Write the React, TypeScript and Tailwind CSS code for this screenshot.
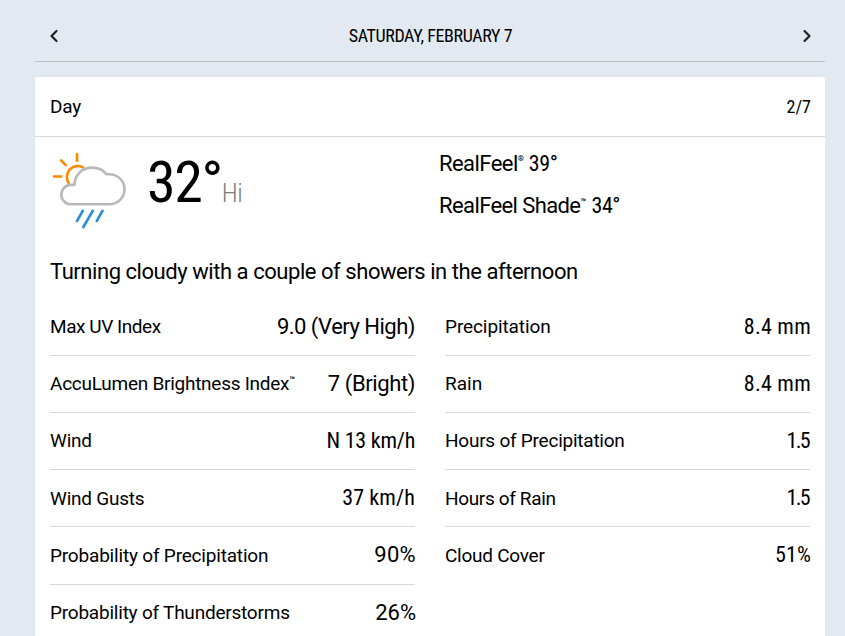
import { ChevronLeft, ChevronRight } from "lucide-react";
import clsx from "clsx";

type Detail = {
  label: string;
  mark?: string;
  value: string;
  labelClass: string;
  valueClass: string;
};

const leftDetails: Detail[] = [
  { label: "Max UV Index", value: "9.0 (Very High)", labelClass: "tracking-[-0.45px]", valueClass: "[font-stretch:100%] tracking-[-0.5px]" },
  { label: "AccuLumen Brightness Index", mark: "™", value: "7 (Bright)", labelClass: "tracking-[-0.26px]", valueClass: "[font-stretch:100%] tracking-[-0.4px]" },
  { label: "Wind", value: "N 13 km/h", labelClass: "tracking-[-0.2px]", valueClass: "tracking-[-0.25px]" },
  { label: "Wind Gusts", value: "37 km/h", labelClass: "tracking-[-0.22px]", valueClass: "tracking-[0.1px]" },
  { label: "Probability of Precipitation", value: "90%", labelClass: "tracking-[-0.19px]", valueClass: "[font-stretch:100%] tracking-[0.3px] -mr-px" },
  { label: "Probability of Thunderstorms", value: "26%", labelClass: "tracking-[-0.22px]", valueClass: "[font-stretch:100%] -mr-px" },
];

const rightDetails: Detail[] = [
  { label: "Precipitation", value: "8.4 mm", labelClass: "tracking-[-0.1px]", valueClass: "-mr-px tracking-[0.25px]" },
  { label: "Rain", value: "8.4 mm", labelClass: "", valueClass: "-mr-px tracking-[0.25px]" },
  { label: "Hours of Precipitation", value: "1.5", labelClass: "tracking-[-0.24px]", valueClass: "tracking-[-1.7px] pr-px" },
  { label: "Hours of Rain", value: "1.5", labelClass: "tracking-[-0.35px]", valueClass: "tracking-[-1.7px] pr-px" },
  { label: "Cloud Cover", value: "51%", labelClass: "tracking-[-0.25px]", valueClass: "-mr-px tracking-[0.1px]" },
];

function DetailList({ items }: { items: Detail[] }) {
  return (
    <div className="w-[365px]">
      {items.map((item) => (
        <div
          key={item.label}
          className="flex h-[57.2px] items-center justify-between border-b border-[#d8d8d8] last:border-transparent"
        >
          <p className={clsx("flex pt-[1.2px] text-[19px] whitespace-nowrap [font-stretch:100%]", item.labelClass)}>
            {item.label}
            {item.mark && (
              <span className="text-[9px] leading-[21px] font-bold tracking-normal">{item.mark}</span>
            )}
          </p>
          <p className={clsx("pb-[1px] text-[22px] whitespace-nowrap", item.valueClass)}>{item.value}</p>
        </div>
      ))}
    </div>
  );
}

function ShowersIcon() {
  return (
    <svg width="80" height="80" viewBox="0 0 80 80" fill="none" strokeWidth="2.6">
      {/* sun */}
      <g stroke="#ff8a00">
        <path d="M27 3v9M10.3 9.7l6.2 6.2M3 26.5h9.3" />
        <path d="M19.3 34a11 11 0 0 1 14.5-16.2" />
      </g>
      {/* cloud */}
      <path
        d="M21 54.3a9.7 9.7 0 0 1 0-19.4h3.3C25 25 31.5 17.6 42 17.6c6 0 11.5 2.5 14.5 6.700h3a15 15 0 0 1 0 30z"
        stroke="#b9b9b9"
        strokeLinejoin="round"
      />
      {/* rain */}
      <path d="M33.3 59.8l-6.800 12M43.3 59.8l-10.500 18.200M53 59.8l-6.700 12" stroke="#2a8ade" />
    </svg>
  );
}

export default function App() {
  return (
    <div className="h-[636px] overflow-hidden bg-[#e3e9f1] pr-5 pl-[35px] font-['Roboto','Liberation_Sans',sans-serif] text-black [font-stretch:75%]">
      {/* Date navigation */}
      <nav className="flex h-[62px] items-center justify-between border-b border-[#bfc1c4] pt-[11px] pr-[8px] pl-[9px]">
        <ChevronLeft size={20} strokeWidth={2.6} color="#202124" />
        <h1 className="pb-[2px] text-[18px] tracking-[-0.4px]">SATURDAY, FEBRUARY 7</h1>
        <ChevronRight size={20} strokeWidth={2.6} color="#202124" />
      </nav>

      <main className="mt-[15px] h-[600px] rounded-[3px] bg-white">
        <header className="flex h-[60px] items-center justify-between border-b border-[#d8d8d8] px-[15px]">
          <h2 className="pt-[2px] text-[19px] tracking-[-0.2px] [font-stretch:100%]">Day</h2>
          <span className="-mr-px text-[18px]">2/7</span>
        </header>

        {/* Temperature */}
        <section className="flex h-[106px] px-[15px]">
          <div className="pt-[13px]">
            <ShowersIcon />
          </div>
          <div className="flex w-[309px] items-baseline pt-[10px] pl-[17px]">
            <span className="text-[58px] leading-[70px] tracking-[-1.4px]">32°</span>
            <span className="text-[26px] font-light tracking-[-0.4px] text-[#7c7c7c]">Hi</span>
          </div>
          <div className="pt-[6px] text-[22px] leading-[42px] whitespace-nowrap">
            <p className="flex">
              <span className="tracking-[-0.55px] [font-stretch:100%]">RealFeel</span>
              <span className="w-[11px] text-[8px] leading-[31px] font-bold">®</span>
              <span className="tracking-[-0.4px]">39°</span>
            </p>
            <p className="flex">
              <span className="tracking-[-0.6px] [font-stretch:100%]">RealFeel Shade</span>
              <span className="w-[11px] text-[9px] leading-[34px] font-bold [font-stretch:100%]">™</span>
              <span className="tracking-[-0.4px]">34°</span>
            </p>
          </div>
        </section>

        <p className="h-[55.6px] px-[15px] pt-[12px] text-[22px] leading-[33px] tracking-[-0.45px] whitespace-nowrap [font-stretch:100%]">
          Turning cloudy with a couple of showers in the afternoon
        </p>

        {/* Half-day details */}
        <section className="flex gap-[30px] px-[15px]">
          <DetailList items={leftDetails} />
          <DetailList items={rightDetails} />
        </section>
      </main>
    </div>
  );
}
